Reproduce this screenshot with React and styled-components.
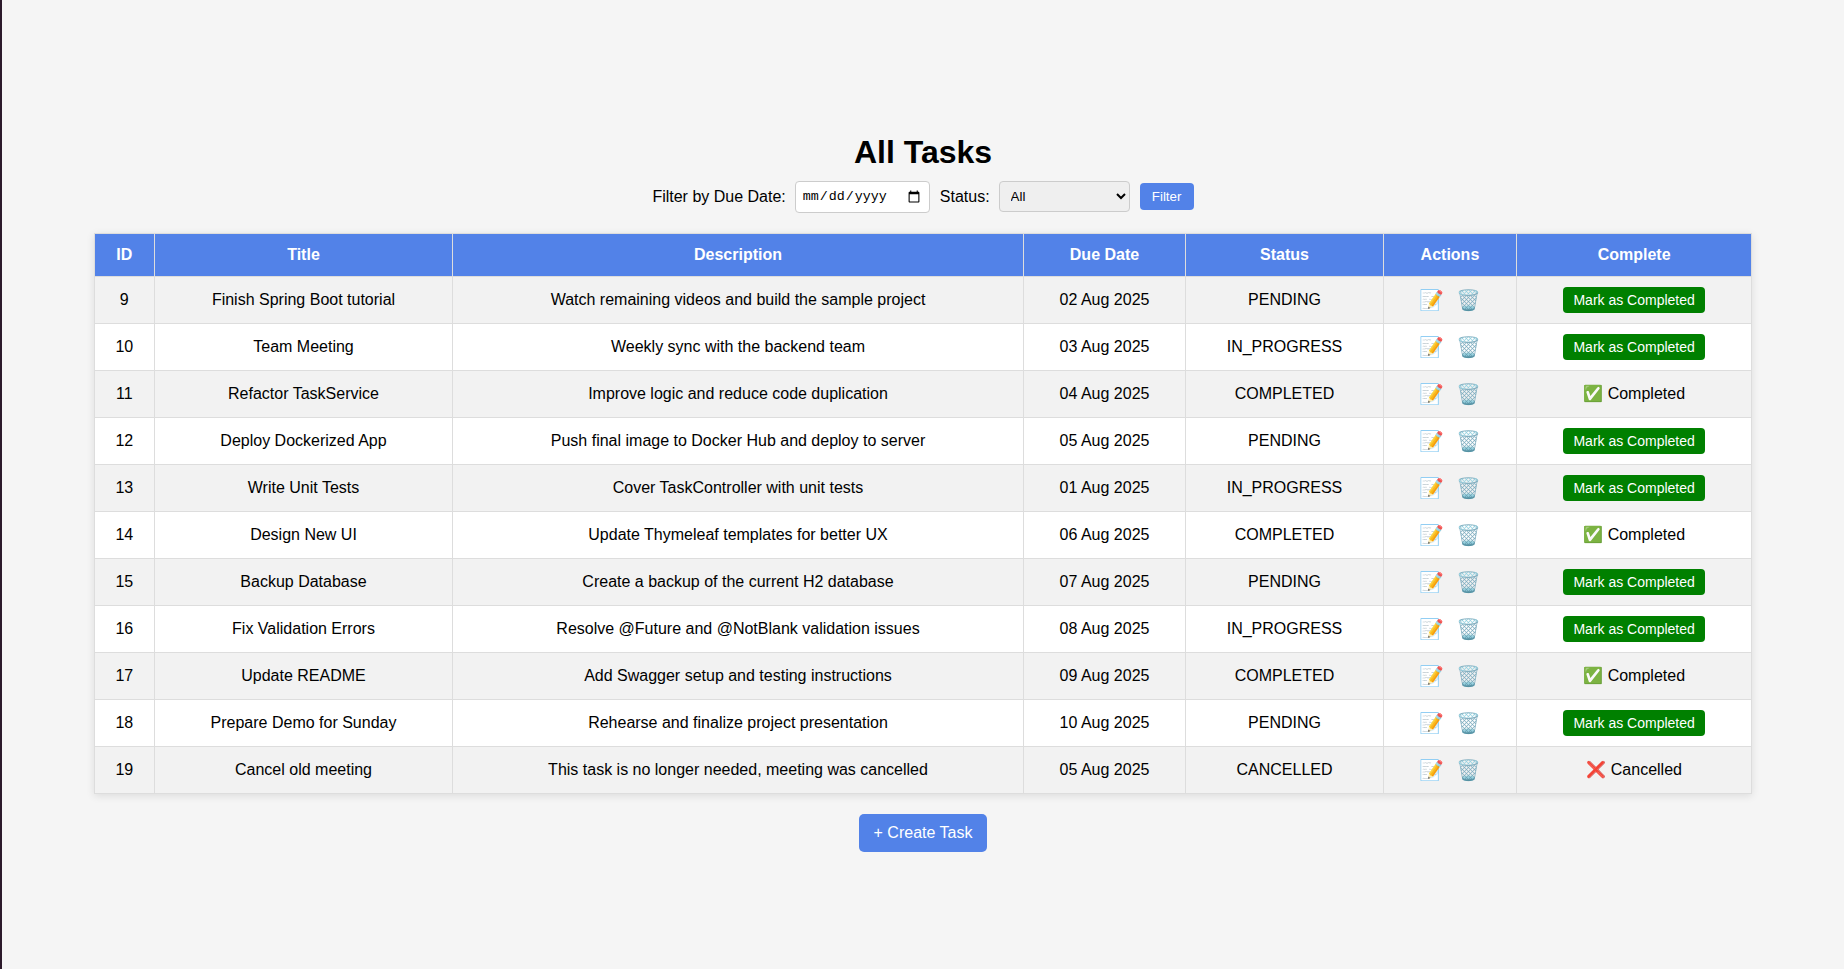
import React from "react";
import styled, { createGlobalStyle } from "styled-components";

const GlobalStyle = createGlobalStyle`
  html, body, #root {
    margin: 0;
    padding: 0;
    height: 100%;
  }
  body {
    background: #f5f5f5;
    font-family: "Liberation Sans", Arial, sans-serif;
    color: #000;
  }
`;

const tasks = [
  { id: 9, title: "Finish Spring Boot tutorial", description: "Watch remaining videos and build the sample project", due: "02 Aug 2025", status: "PENDING" },
  { id: 10, title: "Team Meeting", description: "Weekly sync with the backend team", due: "03 Aug 2025", status: "IN_PROGRESS" },
  { id: 11, title: "Refactor TaskService", description: "Improve logic and reduce code duplication", due: "04 Aug 2025", status: "COMPLETED" },
  { id: 12, title: "Deploy Dockerized App", description: "Push final image to Docker Hub and deploy to server", due: "05 Aug 2025", status: "PENDING" },
  { id: 13, title: "Write Unit Tests", description: "Cover TaskController with unit tests", due: "01 Aug 2025", status: "IN_PROGRESS" },
  { id: 14, title: "Design New UI", description: "Update Thymeleaf templates for better UX", due: "06 Aug 2025", status: "COMPLETED" },
  { id: 15, title: "Backup Database", description: "Create a backup of the current H2 database", due: "07 Aug 2025", status: "PENDING" },
  { id: 16, title: "Fix Validation Errors", description: "Resolve @Future and @NotBlank validation issues", due: "08 Aug 2025", status: "IN_PROGRESS" },
  { id: 17, title: "Update README", description: "Add Swagger setup and testing instructions", due: "09 Aug 2025", status: "COMPLETED" },
  { id: 18, title: "Prepare Demo for Sunday", description: "Rehearse and finalize project presentation", due: "10 Aug 2025", status: "PENDING" },
  { id: 19, title: "Cancel old meeting", description: "This task is no longer needed, meeting was cancelled", due: "05 Aug 2025", status: "CANCELLED" },
];

const columns = [
  { name: "ID", width: 60.4 },
  { name: "Title", width: 298 },
  { name: "Description", width: 571 },
  { name: "Due Date", width: 162 },
  { name: "Status", width: 198 },
  { name: "Actions", width: 132.9 },
  { name: "Complete", width: 235.5 },
];

const Shell = styled.div`
  display: flex;
  min-height: 100%;
`;

const Edge = styled.div`
  width: 2px;
  flex-shrink: 0;
  background: #2c1a2b;
`;

const Page = styled.main`
  flex: 1;
  display: flex;
  flex-direction: column;
  align-items: center;
  padding-top: 134px;
`;

const Heading = styled.h1`
  margin: 0 0 9.75px;
  font-size: 32px;
  line-height: 37px;
  font-weight: 700;
`;

const FilterForm = styled.form`
  display: flex;
  align-items: center;
  font-size: 16px;
  margin-bottom: 20.25px;
`;

const FilterLabel = styled.label`
  margin-right: 9px;
`;

const DateInput = styled.input`
  box-sizing: border-box;
  width: 135px;
  height: 32px;
  margin-right: 10px;
  padding: 5px 6px;
  background: #fff;
  border: 1px solid #ccc;
  border-radius: 4px;
  font-family: "Liberation Mono", monospace;
  font-size: 13.33px;
`;

const StatusSelect = styled.select`
  box-sizing: border-box;
  width: 131px;
  height: 31px;
  margin-right: 10px;
  padding: 5px 7px;
  background: #efefef;
  border: 1px solid #ccc;
  border-radius: 4px;
  font-family: "Liberation Sans", Arial, sans-serif;
  font-size: 13.33px;
`;

const FilterButton = styled.button`
  box-sizing: border-box;
  width: 54px;
  height: 27px;
  padding: 0;
  background: #5282e8;
  color: #fff;
  border: none;
  border-radius: 4px;
  font-family: "Liberation Sans", Arial, sans-serif;
  font-size: 13.33px;
`;

const Table = styled.table`
  width: 90%;
  table-layout: fixed;
  border-collapse: collapse;
  background: #fff;
  box-shadow: 0 2px 8px rgba(0, 0, 0, 0.1);
`;

const Column = styled.col`
  width: ${(props) => props.$width}px;
`;

const HeadCell = styled.th`
  padding: 12px;
  background: #5282e8;
  color: #fff;
  border: 1px solid #ddd;
  font-size: 16px;
  line-height: 18px;
  font-weight: 700;
  text-align: center;
`;

const Row = styled.tr`
  background: ${(props) => (props.$striped ? "#f2f2f2" : "#fff")};
`;

const Cell = styled.td`
  padding: 10px 12px;
  height: 26px;
  border: 1px solid #ddd;
  font-size: 16px;
  line-height: 18px;
  text-align: center;
`;

const IconLink = styled.a`
  display: inline-block;
  margin: 0 6px;
  font-size: 20px;
  line-height: 22px;
  text-decoration: none;
  vertical-align: middle;
`;

const CompleteButton = styled.button`
  box-sizing: border-box;
  height: 26px;
  padding: 0 10px;
  background: #008000;
  color: #fff;
  border: none;
  border-radius: 4px;
  font-family: "Liberation Sans", Arial, sans-serif;
  font-size: 14px;
  vertical-align: middle;
`;

const CreateButton = styled.a`
  margin-top: 20px;
  padding: 10px 15px;
  background: #5282e8;
  color: #fff;
  border-radius: 5px;
  font-size: 16px;
  line-height: 18px;
  text-decoration: none;
`;

function CompleteCell({ status }) {
  if (status === "COMPLETED") return <span>✅ Completed</span>;
  if (status === "CANCELLED") return <span>❌ Cancelled</span>;
  return <CompleteButton type="button">Mark as Completed</CompleteButton>;
}

function App() {
  return (
    <Shell>
      <GlobalStyle />
      <Edge />
      <Page>
        <Heading>All Tasks</Heading>
        <FilterForm onSubmit={(e) => e.preventDefault()}>
          <FilterLabel>Filter by Due Date:</FilterLabel>
          <DateInput type="date" />
          <FilterLabel>Status:</FilterLabel>
          <StatusSelect defaultValue="">
            <option value="">All</option>
            <option>PENDING</option>
            <option>IN_PROGRESS</option>
            <option>COMPLETED</option>
            <option>CANCELLED</option>
          </StatusSelect>
          <FilterButton type="submit">Filter</FilterButton>
        </FilterForm>
        <Table>
          <colgroup>
            {columns.map((col) => (
              <Column key={col.name} $width={col.width} />
            ))}
          </colgroup>
          <thead>
            <tr>
              {columns.map((col) => (
                <HeadCell key={col.name}>{col.name}</HeadCell>
              ))}
            </tr>
          </thead>
          <tbody>
            {tasks.map((task, i) => (
              <Row key={task.id} $striped={i % 2 === 0}>
                <Cell>{task.id}</Cell>
                <Cell>{task.title}</Cell>
                <Cell>{task.description}</Cell>
                <Cell>{task.due}</Cell>
                <Cell>{task.status}</Cell>
                <Cell>
                  <IconLink href="#">📝</IconLink>
                  <IconLink href="#">🗑️</IconLink>
                </Cell>
                <Cell>
                  <CompleteCell status={task.status} />
                </Cell>
              </Row>
            ))}
          </tbody>
        </Table>
        <CreateButton href="#">+ Create Task</CreateButton>
      </Page>
    </Shell>
  );
}

export default App;
